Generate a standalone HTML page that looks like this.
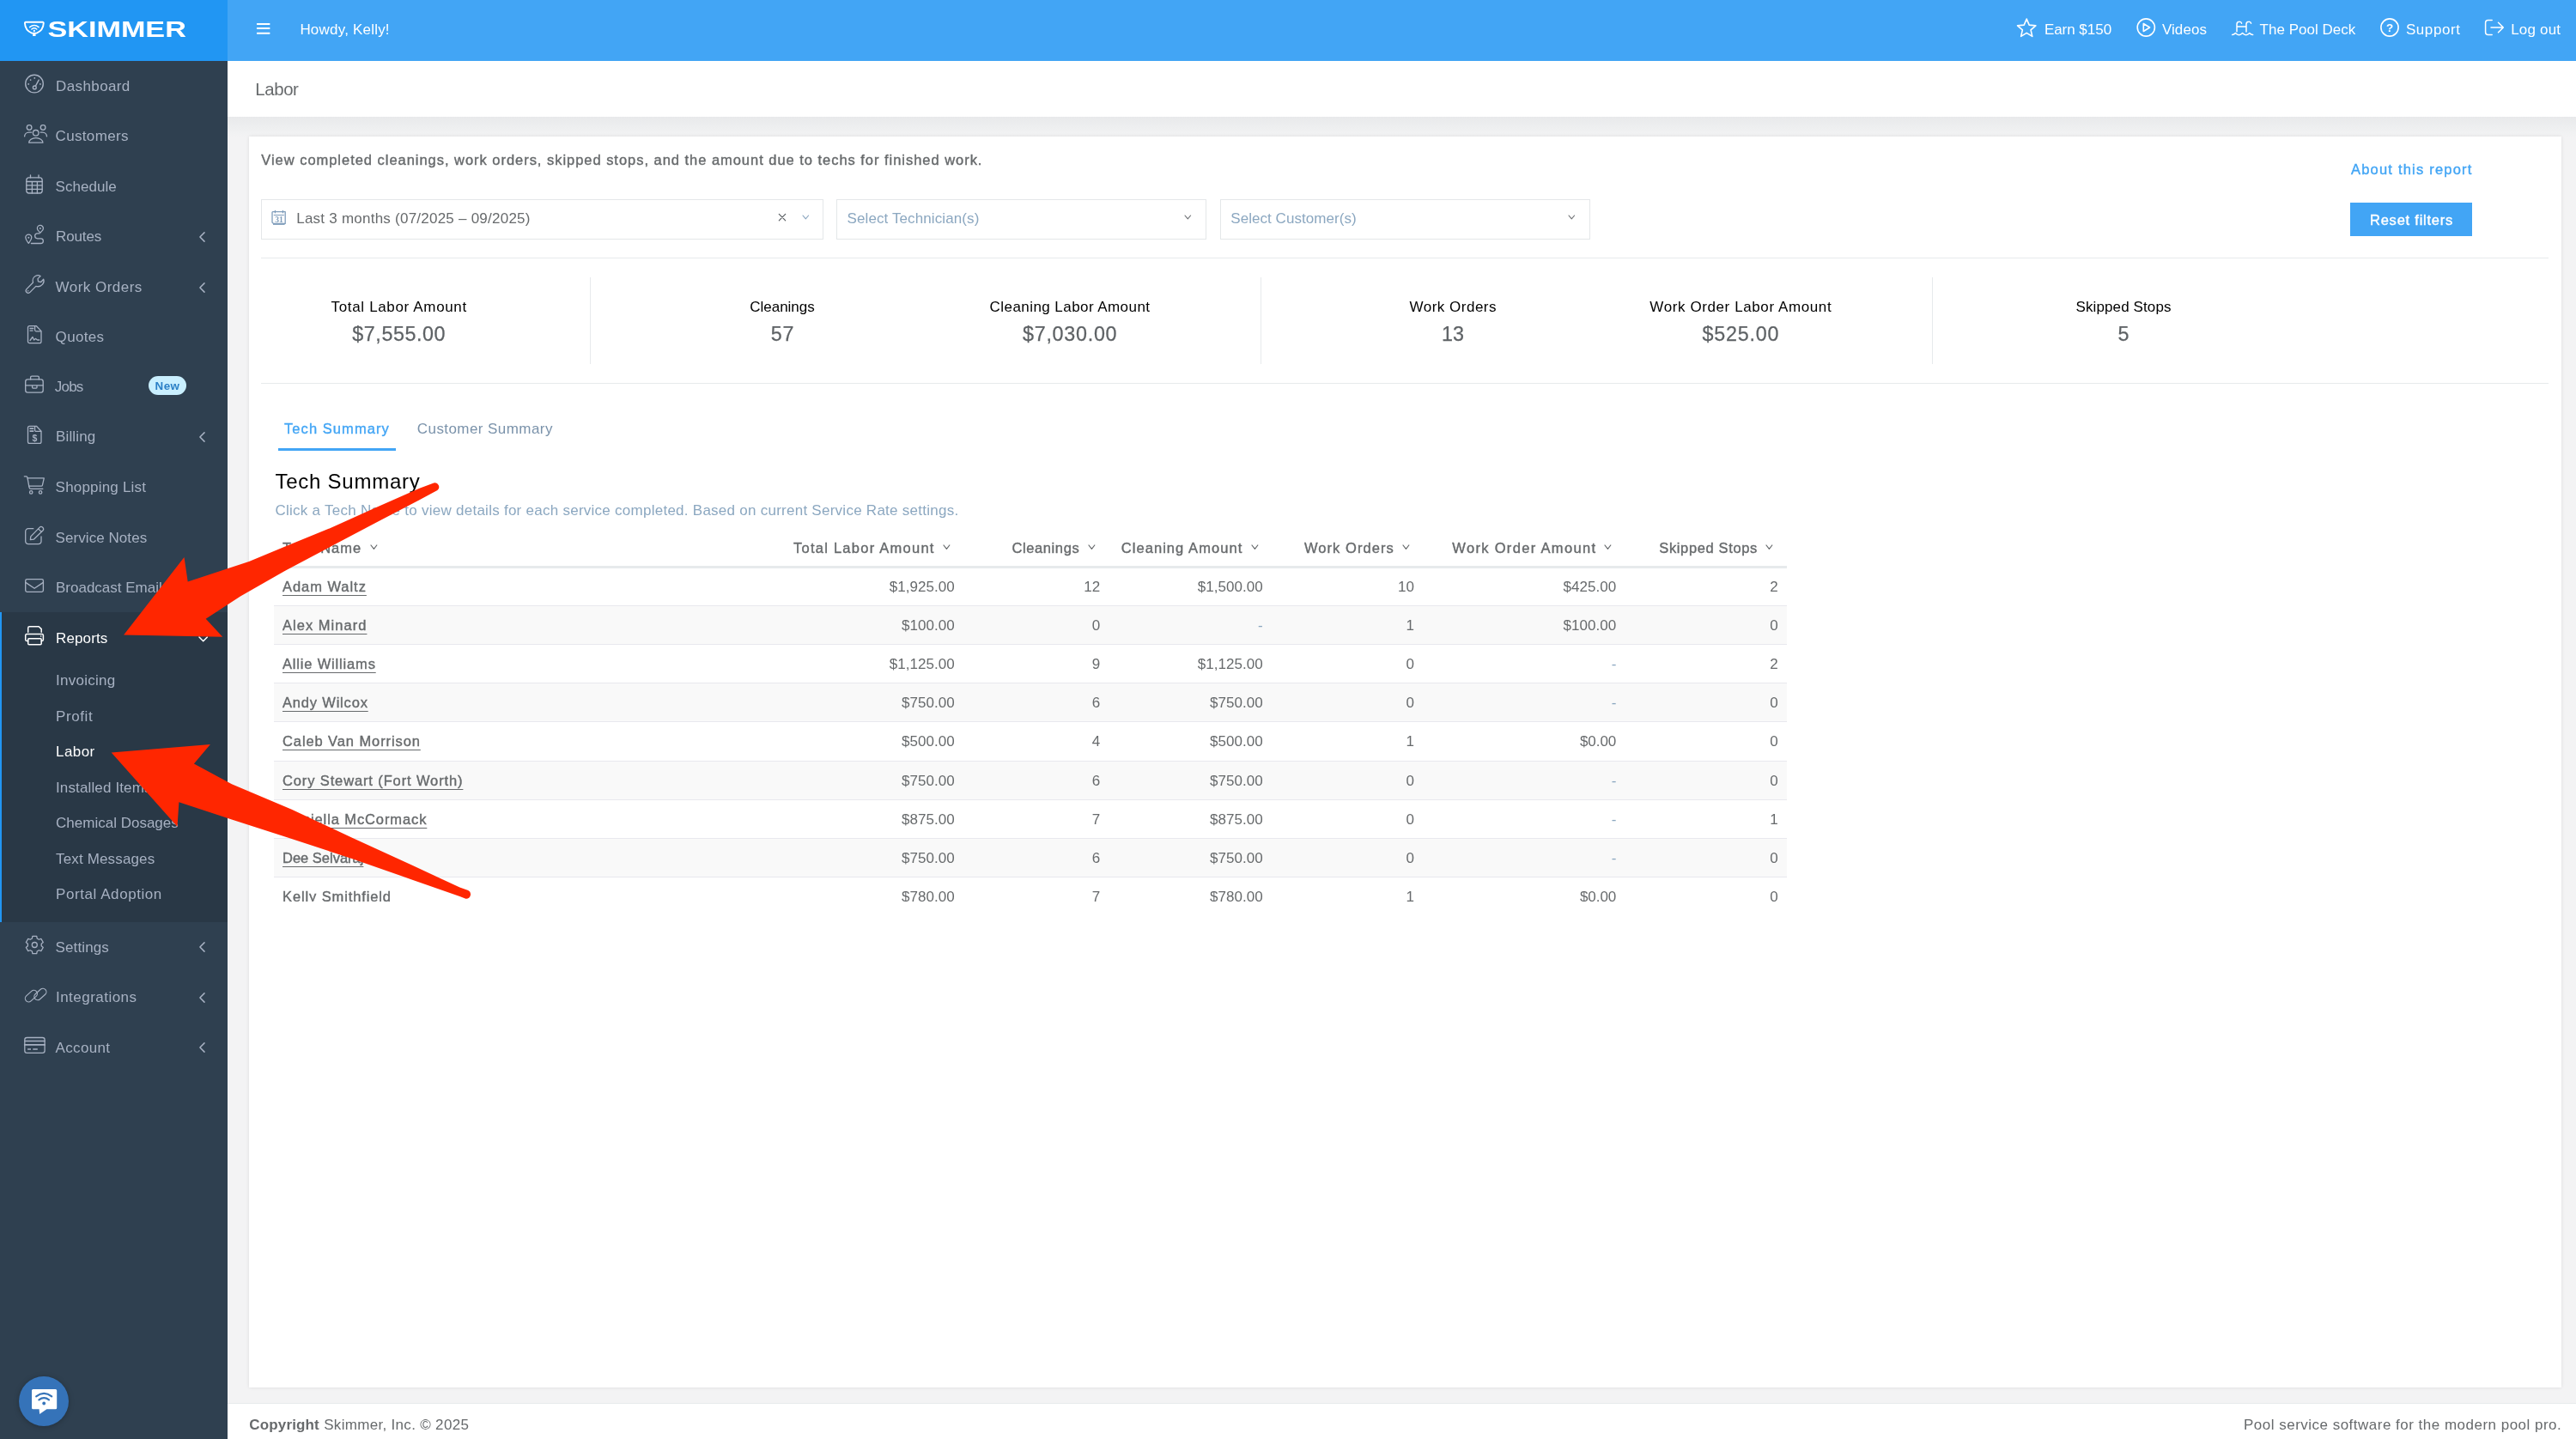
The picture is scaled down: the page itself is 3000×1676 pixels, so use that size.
<!DOCTYPE html>
<html lang="en">
<head>
<meta charset="utf-8">
<title>Labor - Skimmer</title>
<style>
html,body{margin:0;padding:0}
body{width:3000px;height:1676px;overflow:hidden;position:relative;background:#f3f3f4;will-change:transform;font-family:"Liberation Sans",sans-serif;color:#676a6c;font-size:17px}
.a,.t{position:absolute}
.t{white-space:pre;margin:0;padding:0;font-weight:400;text-decoration:none;display:block}
ul,li,nav,header,main,footer,section,table{margin:0;padding:0;list-style:none}
#side{left:0;top:0;width:265px;height:1676px;background:#2f4050}
#logo{left:0;top:0;width:265px;height:70.8px;background:#2196f3}
#act{left:0;top:712.8px;width:265px;height:361.1px;background:#293846;border-left:2.6px solid #2196f3;box-sizing:border-box}
#top{left:265px;top:0;width:2735px;height:70.8px;background:#42a5f5}
#ttl{left:265px;top:70.8px;width:2735px;height:65.4px;background:#fff}
#band{left:265px;top:136.2px;width:2735px;height:23px;background:linear-gradient(#e8e9eb,#eeeff0 55%,#f3f3f4)}
#card{left:290px;top:159px;width:2693px;height:1457px;background:#fff;box-shadow:0 0 4px rgba(0,0,0,.1)}
.sel{height:46.3px;border:1.3px solid #e4e7e9;box-sizing:border-box;background:#fff;top:232.4px}
.hr{height:1.3px;background:#e7eaec;left:304.3px;width:2663.5px}
.vr{width:1.3px;background:#e7eaec;top:323.2px;height:101.1px}
#reset{left:2736.9px;top:236px;width:142px;height:38.7px;background:#42a5f5}
#tabline{left:324.2px;top:521.8px;width:136.8px;height:3.5px;background:#42a5f5}
#tbl{left:319px;top:625px;width:1762px;height:425.4px;overflow:hidden}
.row{left:0;width:1762px;height:45.15px;box-sizing:border-box;border-top:1.2px solid #e8e8ee}
.row.odd{background:#f9f9f9}
#thb{left:0;top:34.2px;width:1762px;height:2.7px;background:#e7eaec}
.nm{text-decoration:underline;text-decoration-thickness:1.2px;text-underline-offset:4.3px}
#foot{left:265px;top:1634px;width:2735px;height:42px;background:#fff;border-top:1.3px solid #e7eaec;box-sizing:border-box}
#badge{left:172.8px;top:438px;width:44px;height:22px;border-radius:11px;background:#c9efff}
#chat{left:22.1px;top:1603px;width:58px;height:58px;border-radius:50%;background:#3573b9;box-shadow:0 1px 6px rgba(0,0,0,.25)}
</style>
</head>
<body>
<nav>
<div class="a" id="side"></div>
<div class="a" id="logo"></div>
<div class="a" id="act"></div>
<svg class="a" style="left:26px;top:20px" width="195" height="28" viewBox="26 20 195 28"><g fill="none" stroke="#fff" stroke-linecap="round" stroke-linejoin="round"><path d="M29.9 25.7 H49.8 A1 1 0 0 1 50.8 26.8 C50.6 31.5 48.4 36.3 42.6 38.6 H37.1 C31.3 36.3 29.1 31.5 28.9 26.8 A1 1 0 0 1 29.9 25.7 Z" stroke-width="1.9"/><path d="M39.85 38.8 V42" stroke-width="3.4" stroke-linecap="butt"/><path d="M34.6 31.6 Q39.85 27.4 45.1 31.6" stroke-width="1.5"/><path d="M36.9 34 Q39.85 31.7 42.8 34" stroke-width="1.5"/></g><circle cx="39.85" cy="35.9" r="1.1" fill="#fff"/><text x="55.4" y="42.9" font-family="Liberation Sans,sans-serif" font-size="25.1" font-weight="700" fill="#fff" textLength="161.5" lengthAdjust="spacingAndGlyphs">SKIMMER</text></svg>
<ul>
<li><svg class="a" style="left:28px;top:86px" width="24" height="24" viewBox="28 86 24 24" fill="none" stroke="#a7b1c2" stroke-width="1.38" stroke-linecap="round" stroke-linejoin="round"><circle cx="40" cy="97.6" r="10.3"/><path d="M45.2 93.1 L41.6 99.9"/><circle cx="40.3" cy="101.9" r="1.9"/><g fill="#a7b1c2" stroke="none"><circle cx="40.3" cy="90.9" r=".9"/><circle cx="35.6" cy="93.1" r=".9"/><circle cx="33.2" cy="97.9" r=".9"/><circle cx="46.9" cy="97.9" r=".9"/></g></svg><a class="t" style="left:65.10px;top:91px;font-size:17px;line-height:19px;color:#a7b1c2;letter-spacing:0.379px;">Dashboard</a></li>
<li><svg class="a" style="left:27px;top:144px" width="29" height="24" viewBox="27 144 29 24" fill="none" stroke="#a7b1c2" stroke-width="1.33" stroke-linecap="round" stroke-linejoin="round"><circle cx="34.1" cy="148.5" r="2.8"/><circle cx="50.1" cy="148.5" r="2.8"/><circle cx="41.7" cy="154.8" r="3.3"/><path d="M36.6 154.2 H33.6 A5 5 0 0 0 28.6 158.9"/><path d="M47.2 154.2 H49.5 A5 5 0 0 1 54.5 158.9"/><path d="M33.7 166.2 H49.9 A8.1 5.6 0 0 0 33.7 166.2 Z"/></svg><a class="t" style="left:64.60px;top:149px;font-size:17px;line-height:19px;color:#a7b1c2;letter-spacing:0.327px;">Customers</a></li>
<li><svg class="a" style="left:29px;top:202px" width="22" height="25" viewBox="29 202 22 25" fill="none" stroke="#a7b1c2" stroke-width="1.33" stroke-linecap="round" stroke-linejoin="round"><rect x="30.8" y="206.9" width="18.4" height="18.1" rx="3"/><path d="M35.5 203.9 V206.9 M45 203.9 V206.9 M30.8 211.5 H49.2 M30.8 215.9 H49.2 M30.8 220.4 H49.2 M37.4 211.5 V225 M43.4 211.5 V225"/></svg><a class="t" style="left:64.60px;top:208px;font-size:17px;line-height:19px;color:#a7b1c2;letter-spacing:0.030px;">Schedule</a></li>
<li><svg class="a" style="left:28px;top:261px" width="25" height="25" viewBox="28 261 25 25" fill="none" stroke="#a7b1c2" stroke-width="1.28" stroke-linecap="round" stroke-linejoin="round"><path d="M46.9 271.2 C45.3 269.0 43.4 268.5 43.4 265.9 A3.5 3.5 0 0 1 50.4 265.9 C50.4 268.5 48.5 269.0 46.9 271.2 Z"/><path d="M33.3 283.4 C31.699999999999996 281.2 29.799999999999997 279.20000000000005 29.799999999999997 276.6 A3.5 3.5 0 0 1 36.8 276.6 C36.8 279.20000000000005 34.9 281.2 33.3 283.4 Z"/><path d="M46 271.9 H43.6 A2.95 2.95 0 0 0 43.6 277.8 H47.5 A2.85 2.85 0 0 1 47.5 283.5 H36.4"/><g fill="#a7b1c2" stroke="none"><circle cx="46.9" cy="266" r="1"/><circle cx="33.3" cy="276.8" r="1"/></g></svg><a class="t" style="left:65.00px;top:266px;font-size:17px;line-height:19px;color:#a7b1c2;letter-spacing:-0.115px;">Routes</a><svg class="a" style="left:231px;top:268.9px" width="9" height="14" viewBox="0 0 9 14"><path d="M7 1.9 L1.9 7 L7 12.1" fill="none" stroke="#a7b1c2" stroke-width="1.5" stroke-linecap="round" stroke-linejoin="round"/></svg></li>
<li><svg class="a" style="left:28px;top:319px" width="25" height="25" viewBox="28 319 25 25" fill="none" stroke="#a7b1c2" stroke-width="1.28" stroke-linecap="round" stroke-linejoin="round"><path d="M38.5 329 C37.5 326.1 38.7 322.9 41.3 321.5 C43.2 320.5 45.5 320.6 47.1 321.6 L44 324.6 L44.5 327.9 L47.7 328.5 L50.7 325.3 C51.4 327.2 51 329.5 49.6 331.2 C47.7 333.5 44.5 334.1 41.8 333.4 L34.7 340.6 A2.7 2.7 0 0 1 30.8 336.9 Z"/><circle cx="32.7" cy="338.8" r=".7" fill="#a7b1c2" stroke="none"/></svg><a class="t" style="left:64.60px;top:325px;font-size:17px;line-height:19px;color:#a7b1c2;letter-spacing:0.465px;">Work Orders</a><svg class="a" style="left:231px;top:327.6px" width="9" height="14" viewBox="0 0 9 14"><path d="M7 1.9 L1.9 7 L7 12.1" fill="none" stroke="#a7b1c2" stroke-width="1.5" stroke-linecap="round" stroke-linejoin="round"/></svg></li>
<li><svg class="a" style="left:31px;top:378px" width="19" height="24" viewBox="31 378 19 24" fill="none" stroke="#a7b1c2" stroke-width="1.28" stroke-linecap="round" stroke-linejoin="round"><path d="M42.4 379.7 H34.4 A1.9 1.9 0 0 0 32.5 381.59999999999997 V397.8 A1.9 1.9 0 0 0 34.4 399.7 H46.1 A1.9 1.9 0 0 0 48 397.8 V385.59999999999997 Z"/><path d="M40.6 380.0 V384.3 A1.5 1.5 0 0 0 42.1 385.8 H47.6"/><path d="M35 382.5 H38.8 M35 385.1 H38.1"/><path d="M35 396.5 L38 392.5 L39.6 396 L41.3 394.4 L43.6 396 H45.8"/></svg><a class="t" style="left:64.60px;top:383px;font-size:17px;line-height:19px;color:#a7b1c2;letter-spacing:0.338px;">Quotes</a></li>
<li><svg class="a" style="left:28px;top:436px" width="24" height="23" viewBox="28 436 24 23" fill="none" stroke="#a7b1c2" stroke-width="1.33" stroke-linecap="round" stroke-linejoin="round"><rect x="29.7" y="441.9" width="20.5" height="15.3" rx="2.6"/><path d="M35.6 441.9 V439.6 A1.5 1.5 0 0 1 37.1 438.1 H43.9 A1.5 1.5 0 0 1 45.4 439.6 V441.9 M29.7 448.8 H50.2 M37.6 448.8 V451.3 A.8 .8 0 0 0 38.4 452.1 H42.2 A.8 .8 0 0 0 43 451.3 V448.8"/></svg><a class="t" style="left:63.80px;top:441px;font-size:17px;line-height:19px;color:#a7b1c2;letter-spacing:-0.807px;">Jobs</a><span class="a" id="badge"></span><span class="t" style="left:180.50px;top:442px;font-size:13.4px;line-height:15px;font-weight:700;color:#2b7fc6;letter-spacing:0.477px;">New</span></li>
<li><svg class="a" style="left:31px;top:494px" width="19" height="25" viewBox="31 494 19 25" fill="none" stroke="#a7b1c2" stroke-width="1.28" stroke-linecap="round" stroke-linejoin="round"><path d="M42.4 496.29999999999995 H34.4 A1.9 1.9 0 0 0 32.5 498.19999999999993 V514.4 A1.9 1.9 0 0 0 34.4 516.3 H46.1 A1.9 1.9 0 0 0 48 514.4 V502.19999999999993 Z"/><path d="M40.6 496.59999999999997 V500.9 A1.5 1.5 0 0 0 42.1 502.4 H47.6"/><path d="M35 499.1 H38.8 M35 502.1 H38.8" stroke-width="1.6"/><text x="40.4" y="514.2" font-family="Liberation Sans,sans-serif" font-size="10.5" font-weight="700" text-anchor="middle" fill="#a7b1c2" stroke="none">$</text></svg><a class="t" style="left:65.00px;top:499px;font-size:17px;line-height:19px;color:#a7b1c2;letter-spacing:0.157px;">Billing</a><svg class="a" style="left:231px;top:501.9px" width="9" height="14" viewBox="0 0 9 14"><path d="M7 1.9 L1.9 7 L7 12.1" fill="none" stroke="#a7b1c2" stroke-width="1.5" stroke-linecap="round" stroke-linejoin="round"/></svg></li>
<li><svg class="a" style="left:27px;top:553px" width="26" height="24" viewBox="27 553 26 24" fill="none" stroke="#a7b1c2" stroke-width="1.28" stroke-linecap="round" stroke-linejoin="round"><path d="M28.3 554.8 H30.6 A1.3 1.3 0 0 1 31.9 555.9 L34 567.6 A2.1 2.1 0 0 0 36.1 569.4 H49.8"/><path d="M32.1 556.9 H51.3 L49.4 565.1 A1.4 1.4 0 0 1 48 566.2 H33.8"/><circle cx="36.2" cy="573.4" r="1.7"/><circle cx="47.1" cy="573.4" r="1.7"/></svg><a class="t" style="left:64.60px;top:558px;font-size:17px;line-height:19px;color:#a7b1c2;letter-spacing:0.197px;">Shopping List</a></li>
<li><svg class="a" style="left:28px;top:612px" width="25" height="24" viewBox="28 612 25 24" fill="none" stroke="#a7b1c2" stroke-width="1.28" stroke-linecap="round" stroke-linejoin="round"><path d="M38.8 615.7 H33 A3.3 3.3 0 0 0 29.7 619 V630.4 A3.3 3.3 0 0 0 33 633.7 H44.7 A3.3 3.3 0 0 0 48 630.4 V625"/><path d="M35.4 628.6 L35.8 624.9 L46 614.4 A2.6 2.6 0 0 1 49.8 618 L39.3 628.2 Z M44.6 615.9 L48.4 619.6"/></svg><a class="t" style="left:64.60px;top:617px;font-size:17px;line-height:19px;color:#a7b1c2;letter-spacing:0.064px;">Service Notes</a></li>
<li><svg class="a" style="left:28px;top:673px" width="24" height="18" viewBox="28 673 24 18" fill="none" stroke="#a7b1c2" stroke-width="1.33" stroke-linecap="round" stroke-linejoin="round"><rect x="29.7" y="674.7" width="20.7" height="14.6" rx="1.8"/><path d="M30.2 678.6 L40.1 685.3 L50 678.6"/></svg><a class="t" style="left:65.00px;top:675px;font-size:17px;line-height:19px;color:#a7b1c2;">Broadcast Emails</a></li>
<li><svg class="a" style="left:28px;top:728px" width="24" height="25" viewBox="28 728 24 25" fill="none" stroke="#fff" stroke-width="1.5" stroke-linecap="round" stroke-linejoin="round"><path d="M32.7 736.2 V731.4 A1.7 1.7 0 0 1 34.4 729.7 H45.2 L48.2 732.6 V736.2"/><path d="M32.7 746.4 H31 A1.3 1.3 0 0 1 29.7 745.1 V739.9 A1.3 1.3 0 0 1 31 738.6 H49.1 A1.3 1.3 0 0 1 50.4 739.9 V745.1 A1.3 1.3 0 0 1 49.1 746.4 H48.2"/><rect x="32.7" y="743.8" width="15.5" height="7" rx="1.2"/><circle cx="47.7" cy="741" r=".8" fill="#fff" stroke="none"/></svg><a class="t" style="left:65.00px;top:734px;font-size:17px;line-height:19px;color:#fff;letter-spacing:0.128px;">Reports</a><svg class="a" style="left:230.80px;top:741.40px" width="11.4" height="6.8" viewBox="-1 -1 11.4 6.8"><path d="M0 0 L4.7 4.8 L9.4 0" fill="none" stroke="#fff" stroke-width="1.5" stroke-linecap="round" stroke-linejoin="round"/></svg></li>
<li><a class="t" style="left:65.00px;top:783px;font-size:17px;line-height:19px;color:#a7b1c2;letter-spacing:0.261px;">Invoicing</a></li>
<li><a class="t" style="left:65.00px;top:825px;font-size:17px;line-height:19px;color:#a7b1c2;letter-spacing:0.603px;">Profit</a></li>
<li><a class="t" style="left:65.00px;top:866px;font-size:17px;line-height:19px;color:#fff;letter-spacing:0.429px;">Labor</a></li>
<li><a class="t" style="left:65.00px;top:908px;font-size:17px;line-height:19px;color:#a7b1c2;letter-spacing:0.135px;">Installed Items</a></li>
<li><a class="t" style="left:65.00px;top:949px;font-size:17px;line-height:19px;color:#a7b1c2;letter-spacing:0.008px;">Chemical Dosages</a></li>
<li><a class="t" style="left:65.00px;top:991px;font-size:17px;line-height:19px;color:#a7b1c2;letter-spacing:0.151px;">Text Messages</a></li>
<li><a class="t" style="left:65.00px;top:1032px;font-size:17px;line-height:19px;color:#a7b1c2;letter-spacing:0.571px;">Portal Adoption</a></li>
<li><svg class="a" style="left:28px;top:1088px" width="25" height="25" viewBox="28 1088 25 25" fill="none" stroke="#a7b1c2" stroke-width="1.28" stroke-linecap="round" stroke-linejoin="round"><path d="M43.23 1093.06 L42.73 1090.39 L37.87 1090.39 L37.37 1093.06 L35.32 1094.24 L32.76 1093.34 L30.33 1097.55 L32.39 1099.32 L32.39 1101.68 L30.33 1103.45 L32.76 1107.66 L35.32 1106.76 L37.37 1107.94 L37.87 1110.61 L42.73 1110.61 L43.23 1107.94 L45.28 1106.76 L47.84 1107.66 L50.27 1103.45 L48.21 1101.68 L48.21 1099.32 L50.27 1097.55 L47.84 1093.34 L45.28 1094.24 Z"/><circle cx="40.3" cy="1100.5" r="3"/></svg><a class="t" style="left:64.60px;top:1094px;font-size:17px;line-height:19px;color:#a7b1c2;letter-spacing:0.109px;">Settings</a><svg class="a" style="left:231px;top:1096.4px" width="9" height="14" viewBox="0 0 9 14"><path d="M7 1.9 L1.9 7 L7 12.1" fill="none" stroke="#a7b1c2" stroke-width="1.5" stroke-linecap="round" stroke-linejoin="round"/></svg></li>
<li><svg class="a" style="left:27px;top:1148px" width="30" height="22" viewBox="27 1148 30 22" fill="none" stroke="#a7b1c2" stroke-width="1.18" stroke-linecap="round" stroke-linejoin="round"><rect x="-8.1" y="-4" width="16.2" height="8" rx="4" transform="translate(36.4 1160.1) rotate(-42)"/><rect x="-8.1" y="-4" width="16.2" height="8" rx="4" transform="translate(46.9 1158) rotate(-42)"/></svg><a class="t" style="left:65.00px;top:1152px;font-size:17px;line-height:19px;color:#a7b1c2;letter-spacing:0.469px;">Integrations</a><svg class="a" style="left:231px;top:1154.7px" width="9" height="14" viewBox="0 0 9 14"><path d="M7 1.9 L1.9 7 L7 12.1" fill="none" stroke="#a7b1c2" stroke-width="1.5" stroke-linecap="round" stroke-linejoin="round"/></svg></li>
<li><svg class="a" style="left:27px;top:1206px" width="27" height="22" viewBox="27 1206 27 22" fill="none" stroke="#a7b1c2" stroke-width="1.28" stroke-linecap="round" stroke-linejoin="round"><rect x="28.8" y="1208.5" width="23.3" height="17.9" rx="2.6"/><path d="M28.8 1212.5 H52.1"/><path d="M28.8 1216.9 H52.1" stroke-width="1.9"/><path d="M32.1 1222 H36 M38.3 1222 H43.8" stroke-width="1.7" stroke-linecap="butt"/></svg><a class="t" style="left:64.60px;top:1211px;font-size:17px;line-height:19px;color:#a7b1c2;letter-spacing:0.327px;">Account</a><svg class="a" style="left:231px;top:1213.2px" width="9" height="14" viewBox="0 0 9 14"><path d="M7 1.9 L1.9 7 L7 12.1" fill="none" stroke="#a7b1c2" stroke-width="1.5" stroke-linecap="round" stroke-linejoin="round"/></svg></li>
</ul>
<div class="a" id="chat"></div><svg class="a" style="left:34px;top:1615px" width="35" height="35" viewBox="34 1615 35 35"><path d="M38.6 1617.9 H64.6 A1.6 1.6 0 0 1 66.2 1619.5 V1639.7 A1.6 1.6 0 0 1 64.6 1641.3 H54.4 L46.1 1647.1 L45.6 1641.3 H38.6 A1.6 1.6 0 0 1 37 1639.7 V1619.5 A1.6 1.6 0 0 1 38.6 1617.9 Z" fill="#fff"/><g fill="none" stroke="#3573b9" stroke-width="2.2" stroke-linecap="round"><path d="M42.2 1626.3 Q51.2 1619.6 60.2 1626.3"/><path d="M45.4 1630.3 Q51.2 1626 57 1630.3"/></g><circle cx="51.2" cy="1634.5" r="1.9" fill="#3573b9"/></svg>
</nav>
<header>
<div class="a" id="top"></div>
<svg class="a" style="left:298px;top:26px" width="18" height="15" viewBox="298 26 18 15" fill="#fff"><rect x="298.9" y="26.9" width="15.6" height="2.1" rx=".7"/><rect x="298.9" y="31.9" width="15.6" height="2.1" rx=".7"/><rect x="298.9" y="37.7" width="15.6" height="2.1" rx=".7"/></svg>
<span class="t" style="left:349.40px;top:25px;font-size:17px;line-height:19px;color:#fff;letter-spacing:0.207px;">Howdy, Kelly!</span>
<svg class="a" style="left:2347px;top:19px" width="27" height="26" viewBox="2347 19 27 26" fill="none" stroke="#fff" stroke-width="1.6" stroke-linecap="round" stroke-linejoin="round"><path d="M2360.20 22.10 L2363.20 29.17 L2370.85 29.84 L2365.05 34.88 L2366.78 42.36 L2360.20 38.40 L2353.62 42.36 L2355.35 34.88 L2349.55 29.84 L2357.20 29.17 Z"/></svg><a class="t" style="left:2380.90px;top:25px;font-size:17px;line-height:19px;color:#fff;letter-spacing:-0.032px;">Earn $150</a>
<svg class="a" style="left:2487px;top:20px" width="25" height="24" viewBox="2487 20 25 24" fill="none" stroke="#fff" stroke-width="1.6" stroke-linecap="round" stroke-linejoin="round"><circle cx="2499.3" cy="32" r="10.1"/><path d="M2496.3 27.5 V36.5 L2503.6 32 Z"/></svg><a class="t" style="left:2517.90px;top:25px;font-size:17px;line-height:19px;color:#fff;letter-spacing:0.083px;">Videos</a>
<svg class="a" style="left:2597px;top:21px" width="29" height="22" viewBox="2597 21 29 22" fill="none" stroke="#fff" stroke-width="1.5" stroke-linecap="round" stroke-linejoin="round"><path d="M2605 36.8 V28.2 A3 3 0 0 1 2608 25.2 A2.6 2.6 0 0 1 2610.6 27.2 M2616 37 V28.2 A3 3 0 0 1 2619 25.2 A2.6 2.6 0 0 1 2621.6 27.2 M2605 31 H2616"/><path d="M2599.6 40.6 Q2601.6 40.6 2603.4 38.6 Q2605.4 40.7 2607.5 40.7 Q2609.6 40.7 2611.6 38.6 Q2613.6 40.7 2615.7 40.7 Q2617.8 40.7 2619.8 38.6 Q2621.6 40.6 2623.7 40.6"/></svg><a class="t" style="left:2631.60px;top:25px;font-size:17px;line-height:19px;color:#fff;letter-spacing:0.008px;">The Pool Deck</a>
<svg class="a" style="left:2771px;top:20px" width="25" height="24" viewBox="2771 20 25 24" fill="none" stroke="#fff" stroke-width="1.6" stroke-linecap="round" stroke-linejoin="round"><circle cx="2783" cy="32" r="10.1"/><text x="2783" y="36.8" font-family="Liberation Sans,sans-serif" font-size="13.5" font-weight="700" text-anchor="middle" fill="#fff" stroke="none">?</text></svg><a class="t" style="left:2801.90px;top:25px;font-size:17px;line-height:19px;color:#fff;letter-spacing:0.592px;">Support</a>
<svg class="a" style="left:2893px;top:22px" width="24" height="20" viewBox="2893 22 24 20" fill="none" stroke="#fff" stroke-width="1.5" stroke-linecap="round" stroke-linejoin="round"><path d="M2902.2 23.4 H2897.6 A3 3 0 0 0 2894.6 26.4 V37.6 A3 3 0 0 0 2897.6 40.6 H2902.2"/><path d="M2901 32 H2915.2 M2909.5 26.3 L2915.3 32 L2909.5 37.7"/></svg><a class="t" style="left:2924.20px;top:25px;font-size:17px;line-height:19px;color:#fff;letter-spacing:0.194px;">Log out</a>
</header>
<main>
<div class="a" id="ttl"></div>
<div class="a" id="band"></div>
<h2 class="t" style="left:297.30px;top:93px;font-size:20.4px;line-height:22px;color:#676a6c;letter-spacing:-0.389px;">Labor</h2>
<section>
<div class="a" id="card"></div>
<div class="a sel" style="left:304.3px;width:655.1px"></div>
<div class="a sel" style="left:974.2px;width:431.3px"></div>
<div class="a sel" style="left:1420.5px;width:431.1px"></div>
<svg class="a" style="left:315px;top:244px" width="19" height="19" viewBox="315 244 19 19" fill="none" stroke="#7f9dbb" stroke-width="1.3" stroke-linecap="round" stroke-linejoin="round"><path d="M317.6 246.6 H332.2 V260.4 H318.6 L317 259 V247.2 Z" stroke-width="1.3"/><path d="M318 261 H331.6" stroke-width="1.8" stroke-linecap="butt"/><path d="M320.4 245.3 V247.8 M329.4 245.3 V247.8" stroke-width="1.2"/><path d="M319.2 250.5 H330.4" stroke-width="1.1"/><text x="325" y="258.8" font-family="Liberation Serif,serif" font-size="9.6" font-weight="700" text-anchor="middle" fill="#7f9dbb" stroke="none" textLength="9.6" lengthAdjust="spacingAndGlyphs">31</text></svg>
<svg class="a" style="left:906px;top:248px" width="10" height="10" viewBox="906 248 10 10" fill="none" stroke="#555a5e" stroke-width="1.15" stroke-linecap="round" stroke-linejoin="round"><path d="M907.3 249.4 L914.7 256.8 M914.7 249.4 L907.3 256.8"/></svg>
<svg class="a" style="left:934.40px;top:250.40px" width="8.6" height="5.9" viewBox="-1 -1 8.6 5.9"><path d="M0 0 L3.3 3.9 L6.6 0" fill="none" stroke="#8aa5bf" stroke-width="1.15" stroke-linecap="round" stroke-linejoin="round"/></svg><svg class="a" style="left:1379.00px;top:250.40px" width="8.6" height="5.9" viewBox="-1 -1 8.6 5.9"><path d="M0 0 L3.3 3.9 L6.6 0" fill="none" stroke="#6f7275" stroke-width="1.15" stroke-linecap="round" stroke-linejoin="round"/></svg><svg class="a" style="left:1826.00px;top:250.40px" width="8.6" height="5.9" viewBox="-1 -1 8.6 5.9"><path d="M0 0 L3.3 3.9 L6.6 0" fill="none" stroke="#6f7275" stroke-width="1.15" stroke-linecap="round" stroke-linejoin="round"/></svg>
<p class="t" style="left:304.30px;top:177px;font-size:16.49px;line-height:18px;-webkit-text-stroke:.4px;color:#676a6c;letter-spacing:0.973px;">View completed cleanings, work orders, skipped stops, and the amount due to techs for finished work.</p>
<a class="t" style="left:2738.00px;top:188px;font-size:16.49px;line-height:18px;-webkit-text-stroke:.4px;color:#42a5f5;letter-spacing:1.209px;">About this report</a>
<span class="t" style="left:345.20px;top:245px;font-size:17px;line-height:19px;color:#676a6c;letter-spacing:0.239px;">Last 3 months (07/2025 – 09/2025)</span>
<span class="t" style="left:986.60px;top:245px;font-size:17px;line-height:19px;color:#8ba7c0;letter-spacing:0.099px;">Select Technician(s)</span>
<span class="t" style="left:1433.30px;top:245px;font-size:17px;line-height:19px;color:#8ba7c0;letter-spacing:0.048px;">Select Customer(s)</span>
<button class="a" id="reset" style="border:0;padding:0"></button><span class="t" style="left:2760.00px;top:247px;font-size:16.49px;line-height:18px;-webkit-text-stroke:.4px;color:#fff;letter-spacing:0.772px;">Reset filters</span>
<div class="a hr" style="top:299.6px"></div>
<div class="a hr" style="top:445.8px"></div>
<div class="a vr" style="left:686.6px"></div><div class="a vr" style="left:1468.1px"></div><div class="a vr" style="left:2249.8px"></div>
<div class="t" style="left:385.60px;top:348px;font-size:17px;line-height:19px;color:#000;letter-spacing:0.654px;">Total Labor Amount</div>
<div class="t" style="left:410.25px;top:376px;font-size:23.3px;line-height:26px;-webkit-text-stroke:.25px;color:#5e6265;letter-spacing:0.580px;">$7,555.00</div>
<div class="t" style="left:873.35px;top:348px;font-size:17px;line-height:19px;color:#000;letter-spacing:-0.039px;">Cleanings</div>
<div class="t" style="left:897.65px;top:376px;font-size:23.3px;line-height:26px;-webkit-text-stroke:.25px;color:#5e6265;letter-spacing:0.778px;">57</div>
<div class="t" style="left:1152.60px;top:348px;font-size:17px;line-height:19px;color:#000;letter-spacing:0.436px;">Cleaning Labor Amount</div>
<div class="t" style="left:1191.05px;top:376px;font-size:23.3px;line-height:26px;-webkit-text-stroke:.25px;color:#5e6265;letter-spacing:0.730px;">$7,030.00</div>
<div class="t" style="left:1641.50px;top:348px;font-size:17px;line-height:19px;color:#000;letter-spacing:0.495px;">Work Orders</div>
<div class="t" style="left:1679.05px;top:376px;font-size:23.3px;line-height:26px;-webkit-text-stroke:.25px;color:#5e6265;letter-spacing:-0.022px;">13</div>
<div class="t" style="left:1921.35px;top:348px;font-size:17px;line-height:19px;color:#000;letter-spacing:0.600px;">Work Order Labor Amount</div>
<div class="t" style="left:1982.55px;top:376px;font-size:23.3px;line-height:26px;-webkit-text-stroke:.25px;color:#5e6265;letter-spacing:0.780px;">$525.00</div>
<div class="t" style="left:2417.55px;top:348px;font-size:17px;line-height:19px;color:#000;letter-spacing:0.105px;">Skipped Stops</div>
<div class="t" style="left:2466.52px;top:376px;font-size:23.3px;line-height:26px;-webkit-text-stroke:.25px;color:#5e6265;">5</div>
<a class="t" style="left:331.00px;top:490px;font-size:16.49px;line-height:18px;-webkit-text-stroke:.4px;color:#42a5f5;letter-spacing:1.078px;">Tech Summary</a>
<a class="t" style="left:485.80px;top:490px;font-size:17px;line-height:19px;color:#7a92aa;letter-spacing:0.431px;">Customer Summary</a>
<div class="a" id="tabline"></div>
<h3 class="t" style="left:320.50px;top:547px;font-size:24px;line-height:27px;color:#000;letter-spacing:0.750px;">Tech Summary</h3>
<p class="t" style="left:320.50px;top:585px;font-size:17px;line-height:19px;color:#8ba7c0;letter-spacing:0.259px;">Click a Tech Name to view details for each service completed. Based on current Service Rate settings.</p>
<div class="a" id="tbl">
<span class="t" style="left:10.00px;top:4px;font-size:16.49px;line-height:18px;-webkit-text-stroke:.4px;color:#676a6c;letter-spacing:0.966px;">Tech Name</span><svg class="a" style="left:112.30px;top:8.60px" width="8.8" height="6.4" viewBox="-1 -1 8.8 6.4"><path d="M0 0 L3.4 4.4 L6.8 0" fill="none" stroke="#676a6c" stroke-width="1.2" stroke-linecap="round" stroke-linejoin="round"/></svg>
<span class="t" style="left:605.00px;top:4px;font-size:16.49px;line-height:18px;-webkit-text-stroke:.4px;color:#676a6c;letter-spacing:1.256px;">Total Labor Amount</span><svg class="a" style="left:779.00px;top:8.60px" width="8.8" height="6.4" viewBox="-1 -1 8.8 6.4"><path d="M0 0 L3.4 4.4 L6.8 0" fill="none" stroke="#676a6c" stroke-width="1.2" stroke-linecap="round" stroke-linejoin="round"/></svg>
<span class="t" style="left:859.40px;top:4px;font-size:16.49px;line-height:18px;-webkit-text-stroke:.4px;color:#676a6c;letter-spacing:0.623px;">Cleanings</span><svg class="a" style="left:948.00px;top:8.60px" width="8.8" height="6.4" viewBox="-1 -1 8.8 6.4"><path d="M0 0 L3.4 4.4 L6.8 0" fill="none" stroke="#676a6c" stroke-width="1.2" stroke-linecap="round" stroke-linejoin="round"/></svg>
<span class="t" style="left:986.70px;top:4px;font-size:16.49px;line-height:18px;-webkit-text-stroke:.4px;color:#676a6c;letter-spacing:1.074px;">Cleaning Amount</span><svg class="a" style="left:1138.00px;top:8.60px" width="8.8" height="6.4" viewBox="-1 -1 8.8 6.4"><path d="M0 0 L3.4 4.4 L6.8 0" fill="none" stroke="#676a6c" stroke-width="1.2" stroke-linecap="round" stroke-linejoin="round"/></svg>
<span class="t" style="left:1199.90px;top:4px;font-size:16.49px;line-height:18px;-webkit-text-stroke:.4px;color:#676a6c;letter-spacing:1.078px;">Work Orders</span><svg class="a" style="left:1314.00px;top:8.60px" width="8.8" height="6.4" viewBox="-1 -1 8.8 6.4"><path d="M0 0 L3.4 4.4 L6.8 0" fill="none" stroke="#676a6c" stroke-width="1.2" stroke-linecap="round" stroke-linejoin="round"/></svg>
<span class="t" style="left:1372.30px;top:4px;font-size:16.49px;line-height:18px;-webkit-text-stroke:.4px;color:#676a6c;letter-spacing:1.334px;">Work Order Amount</span><svg class="a" style="left:1549.00px;top:8.60px" width="8.8" height="6.4" viewBox="-1 -1 8.8 6.4"><path d="M0 0 L3.4 4.4 L6.8 0" fill="none" stroke="#676a6c" stroke-width="1.2" stroke-linecap="round" stroke-linejoin="round"/></svg>
<span class="t" style="left:1613.30px;top:4px;font-size:16.49px;line-height:18px;-webkit-text-stroke:.4px;color:#676a6c;letter-spacing:0.641px;">Skipped Stops</span><svg class="a" style="left:1737.40px;top:8.60px" width="8.8" height="6.4" viewBox="-1 -1 8.8 6.4"><path d="M0 0 L3.4 4.4 L6.8 0" fill="none" stroke="#676a6c" stroke-width="1.2" stroke-linecap="round" stroke-linejoin="round"/></svg>
<div class="row a" style="top:34.85px;border-top:0;"></div><a class="t nm" style="left:10.00px;top:49px;font-size:16.49px;line-height:18px;-webkit-text-stroke:.4px;color:#676a6c;letter-spacing:0.961px;">Adam Waltz</a><span class="t" style="left:716.80px;top:49px;font-size:17px;line-height:19px;color:#676a6c;letter-spacing:0.032px;">$1,925.00</span><span class="t" style="left:943.18px;top:49px;font-size:17px;line-height:19px;color:#676a6c;">12</span><span class="t" style="left:1075.80px;top:49px;font-size:17px;line-height:19px;color:#676a6c;letter-spacing:0.032px;">$1,500.00</span><span class="t" style="left:1309.08px;top:49px;font-size:17px;line-height:19px;color:#676a6c;">10</span><span class="t" style="left:1501.50px;top:49px;font-size:17px;line-height:19px;color:#676a6c;letter-spacing:0.058px;">$425.00</span><span class="t" style="left:1742.23px;top:49px;font-size:17px;line-height:19px;color:#676a6c;">2</span>
<div class="row a odd" style="top:80.00px;"></div><a class="t nm" style="left:10.00px;top:94px;font-size:16.49px;line-height:18px;-webkit-text-stroke:.4px;color:#676a6c;letter-spacing:1.035px;">Alex Minard</a><span class="t" style="left:730.90px;top:94px;font-size:17px;line-height:19px;color:#676a6c;letter-spacing:0.058px;">$100.00</span><span class="t" style="left:952.63px;top:94px;font-size:17px;line-height:19px;color:#676a6c;">0</span><span class="t" style="left:1146.03px;top:94px;font-size:17px;line-height:19px;color:#8ba7c0;">-</span><span class="t" style="left:1318.53px;top:94px;font-size:17px;line-height:19px;color:#676a6c;">1</span><span class="t" style="left:1501.50px;top:94px;font-size:17px;line-height:19px;color:#676a6c;letter-spacing:0.058px;">$100.00</span><span class="t" style="left:1742.23px;top:94px;font-size:17px;line-height:19px;color:#676a6c;">0</span>
<div class="row a" style="top:125.15px;"></div><a class="t nm" style="left:10.00px;top:139px;font-size:16.49px;line-height:18px;-webkit-text-stroke:.4px;color:#676a6c;letter-spacing:0.831px;">Allie Williams</a><span class="t" style="left:716.80px;top:139px;font-size:17px;line-height:19px;color:#676a6c;letter-spacing:0.032px;">$1,125.00</span><span class="t" style="left:952.63px;top:139px;font-size:17px;line-height:19px;color:#676a6c;">9</span><span class="t" style="left:1075.80px;top:139px;font-size:17px;line-height:19px;color:#676a6c;letter-spacing:0.032px;">$1,125.00</span><span class="t" style="left:1318.53px;top:139px;font-size:17px;line-height:19px;color:#676a6c;">0</span><span class="t" style="left:1557.63px;top:139px;font-size:17px;line-height:19px;color:#8ba7c0;">-</span><span class="t" style="left:1742.23px;top:139px;font-size:17px;line-height:19px;color:#676a6c;">2</span>
<div class="row a odd" style="top:170.30px;"></div><a class="t nm" style="left:10.00px;top:184px;font-size:16.49px;line-height:18px;-webkit-text-stroke:.4px;color:#676a6c;letter-spacing:0.820px;">Andy Wilcox</a><span class="t" style="left:730.90px;top:184px;font-size:17px;line-height:19px;color:#676a6c;letter-spacing:0.058px;">$750.00</span><span class="t" style="left:952.63px;top:184px;font-size:17px;line-height:19px;color:#676a6c;">6</span><span class="t" style="left:1089.90px;top:184px;font-size:17px;line-height:19px;color:#676a6c;letter-spacing:0.058px;">$750.00</span><span class="t" style="left:1318.53px;top:184px;font-size:17px;line-height:19px;color:#676a6c;">0</span><span class="t" style="left:1557.63px;top:184px;font-size:17px;line-height:19px;color:#8ba7c0;">-</span><span class="t" style="left:1742.23px;top:184px;font-size:17px;line-height:19px;color:#676a6c;">0</span>
<div class="row a" style="top:215.45px;"></div><a class="t nm" style="left:10.00px;top:229px;font-size:16.49px;line-height:18px;-webkit-text-stroke:.4px;color:#676a6c;letter-spacing:0.908px;">Caleb Van Morrison</a><span class="t" style="left:730.90px;top:229px;font-size:17px;line-height:19px;color:#676a6c;letter-spacing:0.058px;">$500.00</span><span class="t" style="left:952.63px;top:229px;font-size:17px;line-height:19px;color:#676a6c;">4</span><span class="t" style="left:1089.90px;top:229px;font-size:17px;line-height:19px;color:#676a6c;letter-spacing:0.058px;">$500.00</span><span class="t" style="left:1318.53px;top:229px;font-size:17px;line-height:19px;color:#676a6c;">1</span><span class="t" style="left:1520.90px;top:229px;font-size:17px;line-height:19px;color:#676a6c;letter-spacing:-0.037px;">$0.00</span><span class="t" style="left:1742.23px;top:229px;font-size:17px;line-height:19px;color:#676a6c;">0</span>
<div class="row a odd" style="top:260.60px;"></div><a class="t nm" style="left:10.00px;top:275px;font-size:16.49px;line-height:18px;-webkit-text-stroke:.4px;color:#676a6c;letter-spacing:0.880px;">Cory Stewart (Fort Worth)</a><span class="t" style="left:730.90px;top:275px;font-size:17px;line-height:19px;color:#676a6c;letter-spacing:0.058px;">$750.00</span><span class="t" style="left:952.63px;top:275px;font-size:17px;line-height:19px;color:#676a6c;">6</span><span class="t" style="left:1089.90px;top:275px;font-size:17px;line-height:19px;color:#676a6c;letter-spacing:0.058px;">$750.00</span><span class="t" style="left:1318.53px;top:275px;font-size:17px;line-height:19px;color:#676a6c;">0</span><span class="t" style="left:1557.63px;top:275px;font-size:17px;line-height:19px;color:#8ba7c0;">-</span><span class="t" style="left:1742.23px;top:275px;font-size:17px;line-height:19px;color:#676a6c;">0</span>
<div class="row a" style="top:305.75px;"></div><a class="t nm" style="left:10.00px;top:320px;font-size:16.49px;line-height:18px;-webkit-text-stroke:.4px;color:#676a6c;letter-spacing:0.902px;">Daniella McCormack</a><span class="t" style="left:730.90px;top:320px;font-size:17px;line-height:19px;color:#676a6c;letter-spacing:0.058px;">$875.00</span><span class="t" style="left:952.63px;top:320px;font-size:17px;line-height:19px;color:#676a6c;">7</span><span class="t" style="left:1089.90px;top:320px;font-size:17px;line-height:19px;color:#676a6c;letter-spacing:0.058px;">$875.00</span><span class="t" style="left:1318.53px;top:320px;font-size:17px;line-height:19px;color:#676a6c;">0</span><span class="t" style="left:1557.63px;top:320px;font-size:17px;line-height:19px;color:#8ba7c0;">-</span><span class="t" style="left:1742.23px;top:320px;font-size:17px;line-height:19px;color:#676a6c;">1</span>
<div class="row a odd" style="top:350.90px;"></div><a class="t nm" style="left:10.00px;top:365px;font-size:16.49px;line-height:18px;-webkit-text-stroke:.4px;color:#676a6c;">Dee Selvaraj</a><span class="t" style="left:730.90px;top:365px;font-size:17px;line-height:19px;color:#676a6c;letter-spacing:0.058px;">$750.00</span><span class="t" style="left:952.63px;top:365px;font-size:17px;line-height:19px;color:#676a6c;">6</span><span class="t" style="left:1089.90px;top:365px;font-size:17px;line-height:19px;color:#676a6c;letter-spacing:0.058px;">$750.00</span><span class="t" style="left:1318.53px;top:365px;font-size:17px;line-height:19px;color:#676a6c;">0</span><span class="t" style="left:1557.63px;top:365px;font-size:17px;line-height:19px;color:#8ba7c0;">-</span><span class="t" style="left:1742.23px;top:365px;font-size:17px;line-height:19px;color:#676a6c;">0</span>
<div class="row a" style="top:396.05px;"></div><a class="t nm" style="left:10.00px;top:410px;font-size:16.49px;line-height:18px;-webkit-text-stroke:.4px;color:#676a6c;letter-spacing:0.887px;">Kelly Smithfield</a><span class="t" style="left:730.90px;top:410px;font-size:17px;line-height:19px;color:#676a6c;letter-spacing:0.058px;">$780.00</span><span class="t" style="left:952.63px;top:410px;font-size:17px;line-height:19px;color:#676a6c;">7</span><span class="t" style="left:1089.90px;top:410px;font-size:17px;line-height:19px;color:#676a6c;letter-spacing:0.058px;">$780.00</span><span class="t" style="left:1318.53px;top:410px;font-size:17px;line-height:19px;color:#676a6c;">1</span><span class="t" style="left:1520.90px;top:410px;font-size:17px;line-height:19px;color:#676a6c;letter-spacing:-0.037px;">$0.00</span><span class="t" style="left:1742.23px;top:410px;font-size:17px;line-height:19px;color:#676a6c;">0</span>
<div class="a" id="thb"></div>
</div>
</section>
</main>
<footer>
<div class="a" id="foot"></div>
<strong class="t" style="left:290.30px;top:1650px;font-size:17px;line-height:19px;font-weight:700;color:#676a6c;letter-spacing:0.152px;">Copyright</strong>
<span class="t" style="left:377.20px;top:1650px;font-size:17px;line-height:19px;color:#676a6c;letter-spacing:0.312px;">Skimmer, Inc. © 2025</span>
<span class="t" style="left:2613.00px;top:1650px;font-size:17px;line-height:19px;color:#676a6c;letter-spacing:0.490px;">Pool service software for the modern pool pro.</span>
</footer>
<svg class="a" style="left:0;top:0;pointer-events:none" width="3000" height="1676" viewBox="0 0 3000 1676"><path d="M505.2 562.5 L488.5 568.8 L436.4 591.7 L384.3 615.2 L332.1 636.5 L290 654.1 L218.7 677.5 L214.5 649 L144.1 739.4 L259.2 741.8 L239.7 720.7 L280 694.4 L332.1 664.7 L384.3 637.1 L436.4 609.4 L488.5 582.3 L509.4 570.9 A4.8 4.8 0 0 0 505.2 562.5 Z" fill="#ff2600"/><path d="M129.7 876.5 L244.9 867 L225.9 889.6 L269.9 913.3 L339.7 942.7 L409.6 975.5 L479.5 1007.6 L535.4 1033.5 L545.2 1037 A5.2 5.2 0 0 1 542.4 1046.8 L535.4 1044 L479.5 1024.4 L409.6 1000 L339.7 976.9 L269.9 954.5 L208.4 934.3 L206.5 962.8 Z" fill="#ff2600"/></svg>
</body>
</html>
